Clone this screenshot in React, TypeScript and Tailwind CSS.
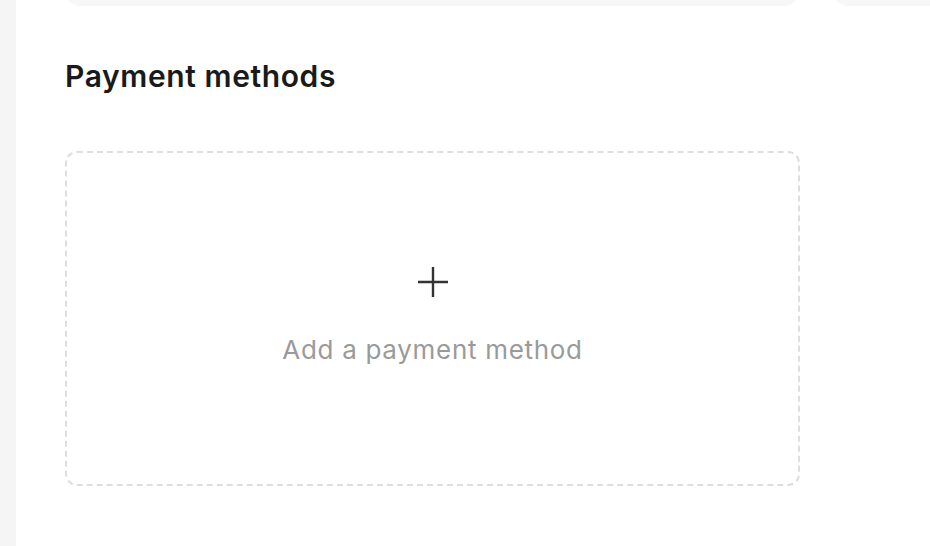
export default function App() {
  return (
    <div className="flex h-[546px] w-[930px] overflow-hidden bg-white font-['Inter',sans-serif]">
      {/* sidebar edge */}
      <div className="w-4 shrink-0 bg-[#f5f5f5]" />

      <main className="flex-1 overflow-hidden pl-[49px]">
        {/* cards above, scrolled mostly out of view */}
        <div className="-mt-[50px] flex gap-[33px]">
          <div className="h-14 w-[735px] shrink-0 rounded-2xl bg-[#f7f7f7]" />
          <div className="h-14 w-[300px] shrink-0 rounded-2xl bg-[#f7f7f7]" />
        </div>

        <h2 className="mt-[52px] text-[30px] leading-9 font-semibold tracking-[0.6px] text-[#1a1a1a]">
          Payment methods
        </h2>

        <button className="mt-[57px] flex h-[335px] w-[735px] flex-col items-center justify-center rounded-xl border-2 border-dashed border-[#dedede] bg-white pb-1">
          <svg width="30" height="30" viewBox="0 0 30 30" fill="none" stroke="#333" strokeWidth="2.4">
            <path d="M15 0v30M0 15h30" />
          </svg>
          <span className="mt-[37px] text-[26px] leading-8 tracking-[0.7px] text-[#9a9a9a]">Add a payment method</span>
        </button>
      </main>
    </div>
  );
}
